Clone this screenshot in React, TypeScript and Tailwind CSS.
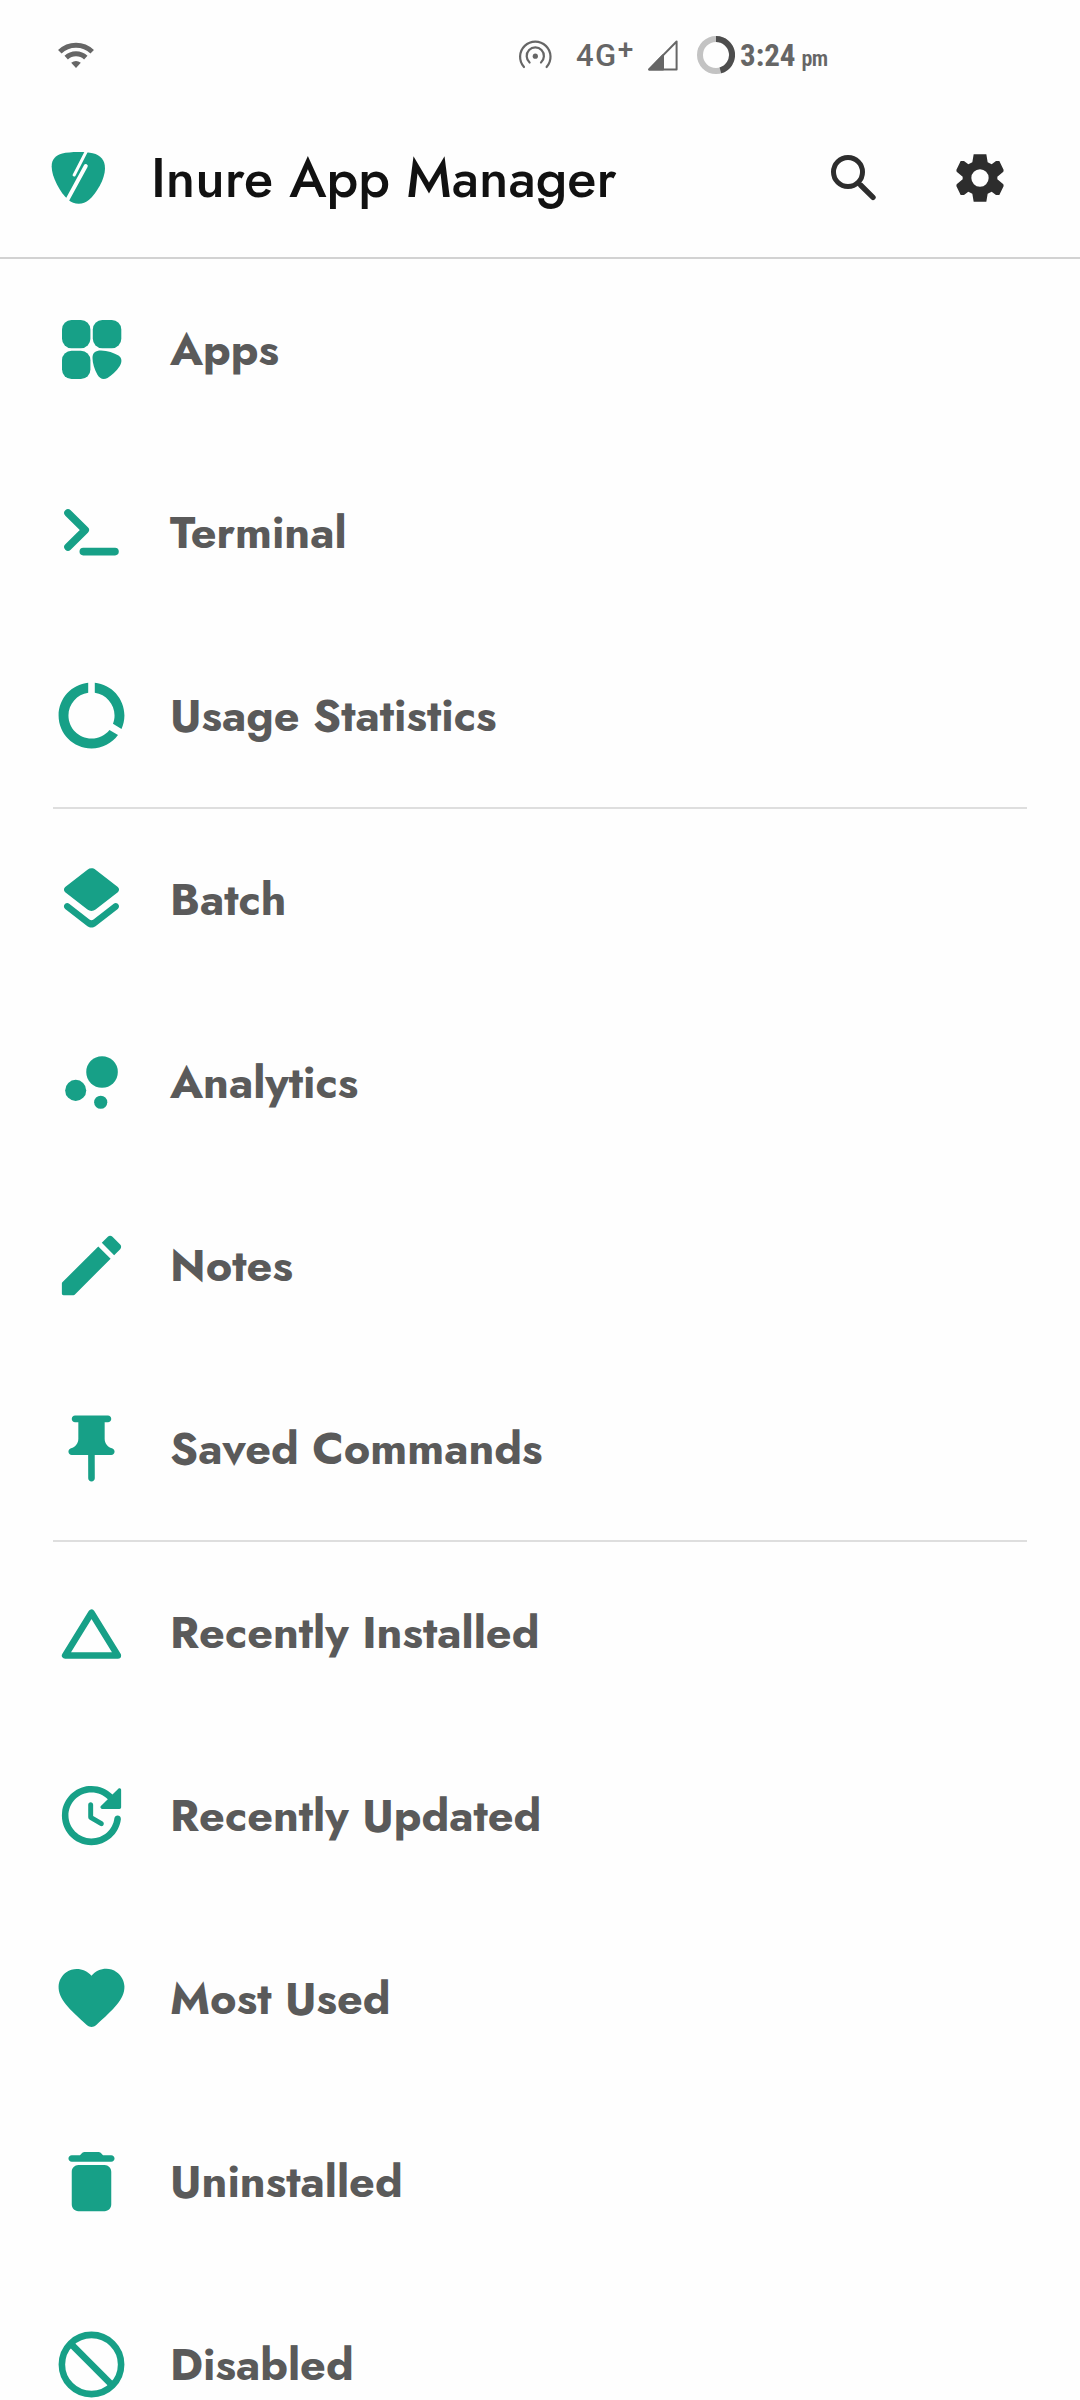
import type { ReactNode } from 'react';

function Glyph({ children }: { children: ReactNode }) {
  return (
    <svg viewBox="0 0 24 24" className="size-[79px] shrink-0 fill-current">
      {children}
    </svg>
  );
}

const icons: Record<string, ReactNode> = {
  apps: (
    <g transform="scale(0.3038)">
      <rect x="10" y="10" width="28.4" height="28.2" rx="9.5" />
      <rect x="40.8" y="10" width="28.5" height="28.2" rx="9.5" />
      <rect x="10" y="40.7" width="28.4" height="28.3" rx="9.5" />
      <path d="M40.5 48C40.5 42.5 43.5 40.4 49 40.4C55.5 40.6 62 42.6 66.5 45.6C70 48 70.3 52 67.8 56C64.5 61 59.5 65.6 55.5 67.9C51.5 70 47.8 69 45.3 64.5C42.5 59.5 40.5 53 40.5 48Z" />
    </g>
  ),
  terminal: (
    <g transform="scale(0.3038)" fill="none" stroke="currentColor" strokeWidth="7.6" strokeLinecap="round" strokeLinejoin="round">
      <path d="M16 20L33.2 37L16 54M31.3 58.6H63" />
    </g>
  ),
  usage: (
    <path d="M13 2.05v3.03c3.39.49 6 3.39 6 6.92 0 .9-.18 1.75-.48 2.54l2.6 1.53c.56-1.24.88-2.62.88-4.07 0-5.18-3.95-9.45-9-9.95zM12 19c-3.87 0-7-3.13-7-7 0-3.53 2.61-6.43 6-6.92V2.05c-5.06.5-9 4.76-9 9.95 0 5.52 4.47 10 9.99 10 3.31 0 6.24-1.61 8.06-4.09l-2.6-1.53C16.17 17.98 14.21 19 12 19z" />
  ),
  batch: (
    <path d="M12.6 18.06c-.36.28-.87.28-1.23 0l-6.15-4.78c-.36-.28-.86-.28-1.22 0-.51.4-.51 1.17 0 1.57l6.76 5.26c.72.56 1.73.56 2.46 0l6.76-5.26c.51-.4.51-1.17 0-1.57l-.01-.01c-.36-.28-.86-.28-1.22 0l-6.15 4.79zm.63-3.02l6.76-5.26c.51-.4.51-1.18 0-1.58l-6.76-5.26c-.72-.56-1.73-.56-2.46 0L4.01 8.21c-.51.4-.51 1.18 0 1.58l6.76 5.26c.72.56 1.74.56 2.46-.01z" />
  ),
  analytics: (
    <>
      <circle cx="7.2" cy="14.4" r="3.2" />
      <circle cx="14.8" cy="18" r="2" />
      <circle cx="15.2" cy="8.8" r="4.8" />
    </>
  ),
  notes: (
    <path d="M3 17.46v3.04c0 .28.22.5.5.5h3.04c.13 0 .26-.05.35-.15L17.81 9.94l-3.75-3.75L3.15 17.1c-.1.1-.15.22-.15.36zM20.71 7.04c.39-.39.39-1.02 0-1.41l-2.34-2.34c-.39-.39-1.02-.39-1.41 0l-1.83 1.83 3.75 3.75 1.83-1.83z" />
  ),
  pin: (
    <path d="M19 12.87c0-.47-.34-.85-.8-.98C16.93 11.54 16 10.38 16 9V4h1c.55 0 1-.45 1-1s-.45-1-1-1H7c-.55 0-1 .45-1 1s.45 1 1 1h1v5c0 1.38-.93 2.54-2.2 2.89-.46.13-.8.51-.8.98V13c0 .55.45 1 1 1h4.98l.02 7c0 .55.45 1 1 1s1-.45 1-1l-.02-7H18c.55 0 1-.45 1-1v-.13z" />
  ),
  triangle: <path d="M12 6L4 19H20Z" fill="none" stroke="currentColor" strokeWidth="2" strokeLinejoin="round" />,
  updated: (
    <path d="M11 8.75v3.68c0 .35.19.68.49.86l3.12 1.85c.36.21.82.09 1.03-.26.21-.36.1-.82-.26-1.03l-2.88-1.71v-3.4c0-.4-.34-.74-.75-.74s-.75.34-.75.75zm10 .75V4.21c0-.45-.54-.67-.85-.35l-1.78 1.78c-1.81-1.81-4.39-2.85-7.21-2.6-4.19.38-7.64 3.75-8.1 7.94C2.46 16.4 6.69 21 12 21c4.59 0 8.38-3.44 8.93-7.88.07-.6-.4-1.12-1-1.12-.5 0-.92.37-.98.86-.43 3.49-3.44 6.19-7.05 6.14-3.71-.05-6.84-3.18-6.9-6.9C4.94 8.2 8.11 5 12 5c1.93 0 3.68.79 4.95 2.05l-2.1 2.1c-.31.31-.09.85.36.85h5.29c.28 0 .5-.22.5-.5z" />
  ),
  heart: (
    <path d="M13.35 20.13c-.76.69-1.93.69-2.69-.01l-.11-.1C5.3 15.27 1.87 12.16 2 8.28c.06-1.7.93-3.33 2.34-4.29 2.64-1.8 5.9-.96 7.66 1.1 1.76-2.06 5.02-2.91 7.66-1.1 1.41.96 2.28 2.59 2.34 4.29.14 3.88-3.3 6.99-8.55 11.76l-.1.09z" />
  ),
  trash: (
    <path d="M6 19c0 1.1.9 2 2 2h8c1.1 0 2-.9 2-2V9c0-1.1-.9-2-2-2H8c-1.1 0-2 .9-2 2v10zM18 4h-2.5l-.71-.71c-.18-.18-.44-.29-.7-.29H9.91c-.26 0-.52.11-.7.29L8.5 4H6c-.55 0-1 .45-1 1s.45 1 1 1h12c.55 0 1-.45 1-1s-.45-1-1-1z" />
  ),
  block: (
    <g fill="none" stroke="currentColor" strokeWidth="2">
      <circle cx="12" cy="12" r="9" />
      <path d="M5.6 5.6L18.4 18.4" />
    </g>
  ),
};

const groups = [
  [
    { icon: 'apps', label: 'Apps' },
    { icon: 'terminal', label: 'Terminal' },
    { icon: 'usage', label: 'Usage Statistics' },
  ],
  [
    { icon: 'batch', label: 'Batch' },
    { icon: 'analytics', label: 'Analytics' },
    { icon: 'notes', label: 'Notes' },
    { icon: 'pin', label: 'Saved Commands' },
  ],
  [
    { icon: 'triangle', label: 'Recently Installed' },
    { icon: 'updated', label: 'Recently Updated' },
    { icon: 'heart', label: 'Most Used' },
    { icon: 'trash', label: 'Uninstalled' },
    { icon: 'block', label: 'Disabled' },
  ],
];

function StatusBar() {
  return (
    <div className="flex h-[110px] items-center pl-[58px] text-[#666]">
      <svg viewBox="0 0 36 26" className="h-[26px] w-9">
        <g fill="none" stroke="currentColor" strokeWidth="5">
          <path d="M1.8 9.8A23.2 23.2 0 0 1 34.2 9.8" />
          <path d="M8.2 15.6A14.4 14.4 0 0 1 27.8 15.6" />
        </g>
        <path d="M18 26L13.2 20.8Q18 17.2 22.8 20.8Z" fill="currentColor" />
      </svg>
      <svg viewBox="0 0 34 32" className="ml-[424px] h-8 w-[34px]" fill="none" stroke="currentColor" strokeWidth="2.2" strokeLinecap="round">
        <path d="M6 28A15.2 15.2 0 1 1 28.6 28" />
        <path d="M11.6 23.5A8.6 8.6 0 1 1 23 23.5" />
        <circle cx="17.3" cy="17.2" r="2.6" fill="currentColor" stroke="none" />
      </svg>
      <div className="ml-6 flex w-[61px] items-center font-[Roboto] font-medium leading-none">
        <span className="text-[31px] tracking-[1.5px]">4G</span>
        <span className="-mt-[11px] text-[28px]">+</span>
      </div>
      <svg viewBox="0 0 30 31" className="ml-[11px] h-[31px] w-[30px]" stroke="currentColor" strokeWidth="2" strokeLinejoin="round">
        <path d="M1.2 29.4L28.6 1.5V29.4Z" fill="none" />
        <path d="M1.2 29.4L15 15.3V29.4Z" fill="currentColor" />
      </svg>
      <svg viewBox="-19 -19 38 38" className="ml-[19px] size-[38px]" fill="none" strokeWidth="6">
        <circle r="16" stroke="#c3c3c3" />
        <path d="M0 -16A16 16 0 0 1 4.4 15.4" stroke="#4d4d4d" />
      </svg>
      <div className="ml-[5px] flex items-baseline gap-[6px] font-['Roboto_Condensed'] leading-none">
        <span className="text-[31px] font-bold">3:24</span>
        <span className="text-[22px] font-semibold tracking-[-0.5px]">pm</span>
      </div>
    </div>
  );
}

function Header() {
  return (
    <header className="flex h-[149px] items-center border-b-2 border-[#d2d2d2] pb-[11px] pl-[51px] pr-[76px]">
      <svg viewBox="34 20 166 162" className="h-[54px] w-[55px] shrink-0">
        <path
          d="M36 66C36 44 48 33 68 27C90 21 138 21 160 26C184 32 197 46 197 72C197 104 172 145 149 167C130 184 103 182 86 167C62 145 36 98 36 66Z"
          fill="#17a087"
        />
        <g stroke="#fefefe" strokeLinecap="round">
          <path d="M142 18L104 92" strokeWidth="9" />
          <path d="M139 65L80 173" strokeWidth="12" />
        </g>
      </svg>
      <h1 className="ml-[45px] text-[54px] font-medium leading-none text-[#111]">Inure App Manager</h1>
      <svg viewBox="0 0 48 48" className="ml-auto size-12" fill="none" stroke="#2d2d2d">
        <circle cx="18" cy="18" r="14.5" strokeWidth="5" />
        <path d="M30.5 31L43 43.3" strokeWidth="5.4" strokeLinecap="round" />
      </svg>
      <svg viewBox="-72 -72 144 144" className="ml-[78px] size-12" fill="#2d2d2d" fillRule="evenodd">
        <path d="M-19 -71H19L23 -47L35 -41L48 -51H58L71 -24L70 -19L52 -4V4L70 19L71 24L58 51H48L35 41L23 47L19 71H-19L-23 47L-35 41L-48 51H-58L-71 24L-70 19L-52 4V-4L-70 -19L-71 -24L-58 -51H-48L-35 -41L-23 -47ZM26 0A26 26 0 1 0 -26 0A26 26 0 1 0 26 0Z" />
      </svg>
    </header>
  );
}

export default function App() {
  return (
    <main className="h-[2400px] w-[1080px] overflow-hidden bg-[#fefefe] font-['Jost',Lato,sans-serif]">
      <StatusBar />
      <Header />
      <nav className="-mt-px">
        {groups.map((group, i) => (
          <div key={i}>
            {i > 0 && <hr className="mx-[53px] -mb-px border-t-2 border-[#dedede]" />}
            {group.map(({ icon, label }) => (
              <a key={label} className="flex h-[183px] items-center pl-[52px] text-[#17a087]">
                <Glyph>{icons[icon]}</Glyph>
                <span className="ml-[39px] text-[45px] font-bold leading-none text-[#5a5a5a]">{label}</span>
              </a>
            ))}
          </div>
        ))}
      </nav>
    </main>
  );
}
